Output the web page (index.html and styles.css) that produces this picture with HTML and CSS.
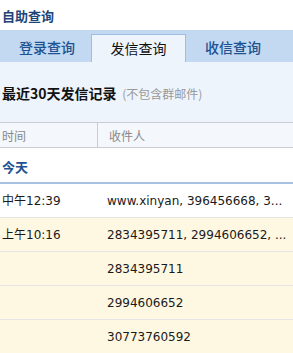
FILE: index.html
```html
<!DOCTYPE html>
<html lang="zh-CN">
<head>
    <meta charset="UTF-8">
    <meta name="viewport" content="width=device-width, initial-scale=1.0">
    <title>自助查询</title>
    <link rel="stylesheet" href="styles.css">
</head>
<body>
    <div class="title">自助查询</div>

    <!-- Tabs -->
    <div class="tabs">
        <div class="tab">登录查询</div>
        <div class="tab active">发信查询</div>
        <div class="tab">收信查询</div>
    </div>

    <div class="summary">
        <span class="summary-main">最近30天发信记录</span>
        <span class="summary-note">(不包含群邮件)</span>
    </div>

    <div class="table-head">
        <div class="col-time">时间</div>
        <div class="col-to">收件人</div>
    </div>

    <div class="day">今天</div>

    <div class="row">
        <div class="col-time">中午12:39</div>
        <div class="col-to">www.xinyan, 396456668, 3...</div>
    </div>
    <div class="row alt">
        <div class="col-time">上午10:16</div>
        <div class="col-to">2834395711, 2994606652, ...</div>
    </div>
    <div class="row alt">
        <div class="col-time"></div>
        <div class="col-to">2834395711</div>
    </div>
    <div class="row alt">
        <div class="col-time"></div>
        <div class="col-to">2994606652</div>
    </div>
    <div class="row alt">
        <div class="col-time"></div>
        <div class="col-to">30773760592</div>
    </div>
</body>
</html>
```

FILE: styles.css
```css
* {
    margin: 0;
    padding: 0;
    box-sizing: border-box;
}

body {
    width: 293px;
    overflow: hidden;
    font-family: "DejaVu Sans", "Noto Sans CJK SC", sans-serif;
    font-size: 12px;
    color: #1a1a1a;
    background: #fff;
}

.title {
    height: 30px;
    padding: 3px 2px 0;
    line-height: 26px;
    font-family: "Noto Sans CJK SC", sans-serif;
    font-size: 13px;
    font-weight: bold;
    color: #1d4477;
}

/* Tabs */
.tabs {
    display: flex;
    height: 32px;
    padding-top: 4px;
    background: #c3d9f2;
}

.tab {
    width: 94px;
    line-height: 27px;
    text-align: center;
    font-family: "Noto Sans CJK SC", sans-serif;
    font-size: 14px;
    font-weight: 500;
    color: #1e5190;
}

.tab.active {
    width: 95px;
    height: 28px;
    margin-left: -3px;
    color: #111;
    font-weight: normal;
    background: #eef4fc;
    border: 1px solid #9dbde2;
    border-bottom: none;
}

.summary {
    height: 60px;
    padding: 0 2px;
    line-height: 62px;
    background: #eef4fc;
    font-family: "Noto Sans CJK SC", sans-serif;
}

.summary-main {
    font-size: 14px;
    font-weight: bold;
    color: #111;
}

.summary-note {
    margin-left: 3px;
    font-size: 12px;
    color: #999;
}

.table-head {
    display: flex;
    height: 26px;
    line-height: 25px;
    background: #f4f7fb;
    border-top: 1px solid #c9cdd3;
    border-bottom: 1px solid #c9cdd3;
    font-family: "Noto Sans CJK SC", sans-serif;
    font-size: 12px;
    color: #888;
}

.table-head .col-time {
    width: 98px;
    border-right: 1px solid #c9cdd3;
}

.table-head .col-to {
    padding-left: 11px;
}

.col-time {
    width: 107px;
    padding-left: 2px;
    flex-shrink: 0;
}

.col-to {
    white-space: nowrap;
    overflow: hidden;
}

.day {
    height: 36px;
    padding: 0 2px;
    line-height: 38px;
    border-bottom: 2px solid #a7c2e0;
    font-family: "Noto Sans CJK SC", sans-serif;
    font-size: 13px;
    font-weight: bold;
    color: #1e5190;
}

.row {
    display: flex;
    height: 34px;
    line-height: 34px;
    border-bottom: 1px solid #e5e5e5;
    background: #fff;
}

.row.alt {
    background: #fef8e3;
}
```
